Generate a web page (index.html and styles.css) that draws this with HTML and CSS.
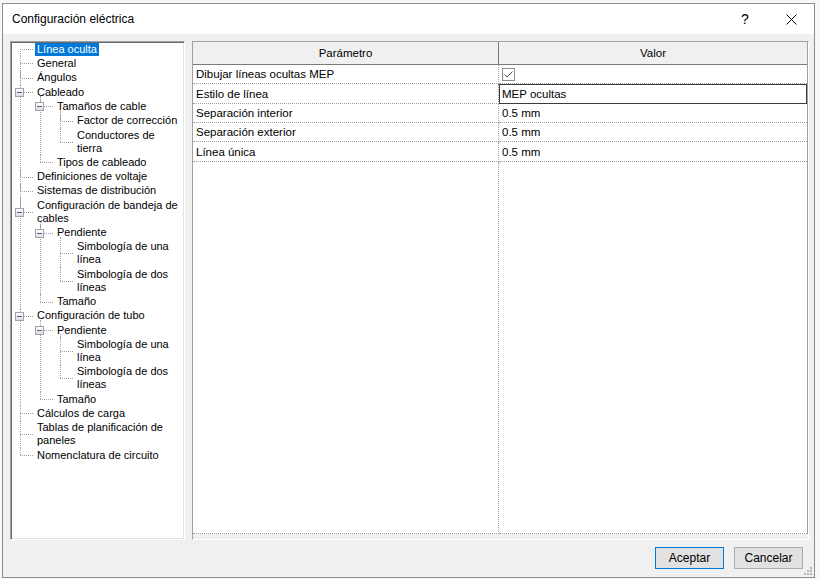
FILE: index.html
```html
<!DOCTYPE html>
<html lang="es">
<head>
    <meta charset="UTF-8">
    <title>Configuración eléctrica</title>
    <link rel="stylesheet" href="styles.css">
</head>
<body>

    <div class="dialog">
        <div class="titlebar">
            <div class="title">Configuración eléctrica</div>
            <div class="caption-btn help">?</div>
            <div class="caption-btn close">
                <svg width="11" height="11" viewBox="0 0 11 11"><path d="M0.5 0.5 L10.5 10.5 M10.5 0.5 L0.5 10.5" stroke="#000" stroke-width="1" fill="none"/></svg>
            </div>
        </div>

        <div class="dialog-body">
            <div class="main">
                <!-- arbol de categorias -->
                <div class="tree-panel">
                    <ul class="tree">
                        <li class="first"><div class="row"><span class="label selected">Línea oculta</span></div></li>
                        <li><div class="row"><span class="label">General</span></div></li>
                        <li><div class="row"><span class="label">Ángulos</span></div></li>
                        <li><div class="row"><span class="toggle"></span><span class="label">Cableado</span></div>
                            <ul>
                                <li><div class="row"><span class="toggle"></span><span class="label">Tamaños de cable</span></div>
                                    <ul>
                                        <li><div class="row"><span class="label">Factor de corrección</span></div></li>
                                        <li><div class="row"><span class="label">Conductores de<br>tierra</span></div></li>
                                    </ul>
                                </li>
                                <li><div class="row"><span class="label">Tipos de cableado</span></div></li>
                            </ul>
                        </li>
                        <li><div class="row"><span class="label">Definiciones de voltaje</span></div></li>
                        <li><div class="row"><span class="label">Sistemas de distribución</span></div></li>
                        <li><div class="row"><span class="toggle"></span><span class="label">Configuración de bandeja de<br>cables</span></div>
                            <ul>
                                <li><div class="row"><span class="toggle"></span><span class="label">Pendiente</span></div>
                                    <ul>
                                        <li><div class="row"><span class="label">Simbología de una<br>línea</span></div></li>
                                        <li><div class="row"><span class="label">Simbología de dos<br>líneas</span></div></li>
                                    </ul>
                                </li>
                                <li><div class="row"><span class="label">Tamaño</span></div></li>
                            </ul>
                        </li>
                        <li><div class="row"><span class="toggle"></span><span class="label">Configuración de tubo</span></div>
                            <ul>
                                <li><div class="row"><span class="toggle"></span><span class="label">Pendiente</span></div>
                                    <ul>
                                        <li><div class="row"><span class="label">Simbología de una<br>línea</span></div></li>
                                        <li><div class="row"><span class="label">Simbología de dos<br>líneas</span></div></li>
                                    </ul>
                                </li>
                                <li><div class="row"><span class="label">Tamaño</span></div></li>
                            </ul>
                        </li>
                        <li><div class="row"><span class="label">Cálculos de carga</span></div></li>
                        <li><div class="row"><span class="label">Tablas de planificación de<br>paneles</span></div></li>
                        <li><div class="row"><span class="label">Nomenclatura de circuito</span></div></li>
                    </ul>
                </div>

                <!-- tabla de parametros -->
                <div class="grid-panel">
                    <div class="grid">
                        <div class="grid-head">
                            <div class="cell">Parámetro</div>
                            <div class="cell">Valor</div>
                        </div>
                        <div class="grid-row">
                            <div class="cell">Dibujar líneas ocultas MEP</div>
                            <div class="cell">
                                <svg class="check" width="13" height="13" viewBox="0 0 13 13"><rect x="0.5" y="0.5" width="12" height="12" fill="#fff" stroke="#8f8f8f"/><path d="M2.5 6.5 L5 9 L10.5 3.5" stroke="#555" stroke-width="1" fill="none"/></svg>
                            </div>
                        </div>
                        <div class="grid-row">
                            <div class="cell">Estilo de línea</div>
                            <div class="cell focused">MEP ocultas</div>
                        </div>
                        <div class="grid-row">
                            <div class="cell">Separación interior</div>
                            <div class="cell">0.5 mm</div>
                        </div>
                        <div class="grid-row">
                            <div class="cell">Separación exterior</div>
                            <div class="cell">0.5 mm</div>
                        </div>
                        <div class="grid-row">
                            <div class="cell">Línea única</div>
                            <div class="cell">0.5 mm</div>
                        </div>
                        <div class="grid-fill">
                            <div class="cell"></div>
                            <div class="cell"></div>
                        </div>
                    </div>
                </div>
            </div>

            <div class="footer">
                <button class="btn default">Aceptar</button>
                <button class="btn">Cancelar</button>
            </div>
        </div>

        <svg class="grip" width="10" height="10" viewBox="0 0 10 10">
            <rect x="7" y="1" width="2" height="2" fill="#b4b4b4"/>
            <rect x="4" y="4" width="2" height="2" fill="#b4b4b4"/>
            <rect x="7" y="4" width="2" height="2" fill="#b4b4b4"/>
            <rect x="1" y="7" width="2" height="2" fill="#b4b4b4"/>
            <rect x="4" y="7" width="2" height="2" fill="#b4b4b4"/>
            <rect x="7" y="7" width="2" height="2" fill="#b4b4b4"/>
        </svg>
    </div>

</body>
</html>
```

FILE: styles.css
```css
body {
    margin: 0;
    padding: 0;
    background: #f7f7f7;
    font-family: "Liberation Sans", Arial, sans-serif;
    color: #000;
}

.dialog {
    position: relative;
    box-sizing: border-box;
    width: 813px;
    height: 575px;
    margin: 3px 0 0 2px;
    border: 1px solid #8c8c8c;
    background: #f0f0f0;
    display: flex;
    flex-direction: column;
}

/* barra de titulo */
.titlebar {
    height: 30px;
    background: #fff;
    display: flex;
    align-items: center;
}

.title {
    flex: 1;
    padding-left: 9px;
    font-size: 12px;
}

.caption-btn {
    width: 46px;
    height: 30px;
    display: flex;
    align-items: center;
    justify-content: center;
}

.help {
    font-size: 14px;
}

.dialog-body {
    flex: 1;
    display: flex;
    flex-direction: column;
    padding: 7px 5px 8px 7px;
}

.main {
    flex: 1;
    display: flex;
    gap: 7px;
    min-height: 0;
}

/* arbol */
.tree-panel {
    box-sizing: border-box;
    width: 175px;
    background: #fff;
    border-left: 1px solid #a0a0a0;
    border-top: 1px solid #a0a0a0;
    border-right: 1px solid #fff;
    border-bottom: 1px solid #fff;
    box-shadow: inset 1px 1px 0 #696969, inset -1px -1px 0 #e3e3e3;
    overflow: hidden;
}

.tree, .tree ul {
    list-style: none;
    margin: 0;
    padding: 0;
}

.tree {
    font-size: 11px;
    line-height: 13px;
}

.tree ul {
    margin-left: -4px;
}

.tree li {
    position: relative;
    padding-left: 24px;
}

    .tree li::after {
        content: "";
        position: absolute;
        left: 9px;
        top: 0;
        bottom: 0;
        border-left: 1px dotted #a0a0a0;
    }

    .tree li:last-child::after {
        display: none;
    }

    .tree li.first::after {
        top: 7px;
    }

.tree .row {
    position: relative;
    padding: 0.66px 0;
}

    .tree .row::before {
        content: "";
        position: absolute;
        left: -15px;
        width: 13px;
        top: 50%;
        border-top: 1px dotted #a0a0a0;
    }

    .tree .row::after {
        content: "";
        position: absolute;
        left: -15px;
        top: 0;
        height: 50%;
        border-left: 1px dotted #a0a0a0;
    }

.tree li.first > .row::after {
    display: none;
}

.tree ul > li:first-child > .row::after {
    top: -3px;
    height: calc(50% + 3px);
}

.label {
    display: inline-block;
    vertical-align: top;
    padding: 0 2px;
    white-space: nowrap;
}

    .label.selected {
        background: #0078d7;
        color: #fff;
    }

.toggle {
    position: absolute;
    z-index: 1;
    left: -20px;
    top: calc(50% - 4px);
    box-sizing: border-box;
    width: 9px;
    height: 9px;
    border: 1px solid #a3a3a3;
    background: linear-gradient(#fdfdfd, #dedede);
}

    .toggle::after {
        content: "";
        position: absolute;
        left: 1px;
        top: 3px;
        width: 5px;
        height: 1px;
        background: #4a6595;
    }

/* tabla de parametros */
.grid-panel {
    flex: 1;
    box-sizing: border-box;
    display: flex;
    flex-direction: column;
    border-left: 1px solid #a0a0a0;
    border-top: 1px solid #a0a0a0;
    border-right: 1px solid #fff;
    border-bottom: 1px solid #fff;
    padding-bottom: 5px;
}

.grid {
    flex: 1;
    display: flex;
    flex-direction: column;
    background: #fff;
    border-right: 1px solid #a0a0a0;
    font-size: 11.5px;
}

.grid-head, .grid-row, .grid-fill {
    display: grid;
    grid-template-columns: 306px 1fr;
}

.grid-head {
    height: 23px;
    background: #f0f0f0;
}

    .grid-head .cell {
        box-sizing: border-box;
        display: flex;
        align-items: center;
        justify-content: center;
        border-bottom: 1px solid #7a7a7a;
    }

        .grid-head .cell:first-child {
            border-right: 1px solid #7a7a7a;
        }

.grid-row {
    height: 19.35px;
}

    .grid-row .cell {
        box-sizing: border-box;
        display: flex;
        align-items: center;
        padding-left: 3px;
        border-bottom: 1px dotted #a0a0a0;
        white-space: nowrap;
    }

        .grid-row .cell:first-child {
            padding-left: 3px;
            border-right: 1px dotted #a0a0a0;
        }

.cell.focused {
    outline: 1px solid #3c3c3c;
    outline-offset: -1px;
}

.check {
    display: block;
}

.grid-fill {
    flex: 1;
}

    .grid-fill .cell {
        border-bottom: 1px dotted #a0a0a0;
    }

        .grid-fill .cell:first-child {
            border-right: 1px dotted #a0a0a0;
        }

/* botones */
.footer {
    margin-top: 7px;
    display: flex;
    justify-content: flex-end;
    gap: 10px;
    padding-right: 6px;
}

.btn {
    width: 69px;
    height: 22px;
    padding: 0;
    font-family: "Liberation Sans", Arial, sans-serif;
    font-size: 12px;
    color: #000;
    background: #e1e1e1;
    border: 1px solid #adadad;
}

    .btn.default {
        border-color: #0078d7;
    }

.grip {
    position: absolute;
    right: 1px;
    bottom: 1px;
}
```
